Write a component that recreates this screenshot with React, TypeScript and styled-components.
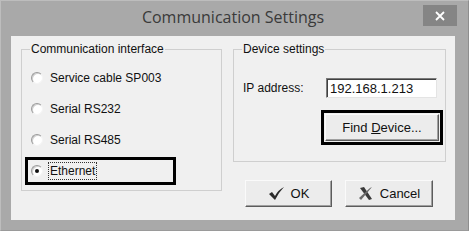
import React from 'react';
import styled, { createGlobalStyle } from 'styled-components';

const GlobalStyle = createGlobalStyle`
  html, body {
    margin: 0;
    padding: 0;
    background: #ffffff;
  }
`;

const Window = styled.div`
  width: 469px;
  height: 231px;
  box-sizing: border-box;
  background: #a9a9a9;
  border: 1px solid #bdbdbd;
  border-right-color: #8e8e8e;
  border-bottom-color: #9a9a9a;
  padding: 0 13px 10px 10px;
  display: flex;
  flex-direction: column;
  font-family: "Liberation Sans", Arial, sans-serif;
  font-size: 12px;
  color: #111;
`;

const TitleBar = styled.div`
  height: 35px;
  display: grid;
  grid-template-columns: 1fr auto 1fr;
  align-items: start;
`;

const Title = styled.div`
  grid-column: 2;
  padding-top: 5px;
  font-family: "Open Sans", "Noto Sans", sans-serif;
  font-size: 16px;
  color: #3a3a3a;
`;

const CloseButton = styled.div`
  grid-column: 3;
  justify-self: end;
  margin-top: 4px;
  margin-right: -2px;
  width: 34px;
  height: 21px;
  background: #858585;
  display: flex;
  align-items: center;
  justify-content: center;
`;

const Client = styled.div`
  flex: 1;
  background: #f0f0f0;
  display: flex;
  gap: 11px;
  padding: 6px 9px 0 10px;
`;

const Group = styled.fieldset<{ $w: number; $h?: number }>`
  width: ${(p) => p.$w}px;
  ${(p) => (p.$h ? `height: ${p.$h}px;` : '')}
  box-sizing: border-box;
  margin: 0;
  border: 1px solid #cfcfcf;
  padding: 3px 3px 0 3px;
  align-self: flex-start;
`;

const Legend = styled.legend`
  padding: 0 1px;
  margin-left: 5px;
  color: #111;
`;

const RadioList = styled.div`
  display: flex;
  flex-direction: column;
  gap: 1px;
  padding: 4px 0 4px 0;
`;

const RadioRow = styled.div<{ $focus?: boolean }>`
  height: ${(p) => (p.$focus ? 28 : 30)}px;
  margin-top: ${(p) => (p.$focus ? 1 : 0)}px;
  width: 151px;
  box-sizing: border-box;
  border: 3px solid ${(p) => (p.$focus ? '#000' : 'transparent')};
  display: flex;
  align-items: center;
  gap: 6px;
  padding-left: 3px;
`;

const RadioDot = styled.span<{ $checked?: boolean }>`
  width: 12px;
  height: 12px;
  box-sizing: border-box;
  border-radius: 50%;
  border: 1px solid;
  border-color: #9a9a9a #f4f4f4 #f4f4f4 #9a9a9a;
  background: #fff;
  box-shadow: inset 1px 1px 0 #d0d0d0;
  display: flex;
  align-items: center;
  justify-content: center;

  &::after {
    content: "";
    width: 4px;
    height: 4px;
    border-radius: 50%;
    background: ${(p) => (p.$checked ? '#111' : 'transparent')};
  }
`;

const RadioLabel = styled.span<{ $focus?: boolean }>`
  padding: 1px 1px;
  outline: ${(p) => (p.$focus ? '1px dotted #333' : 'none')};
`;

const RightColumn = styled.div`
  display: flex;
  flex-direction: column;
`;

const DeviceBody = styled.div`
  display: flex;
  flex-direction: column;
  align-items: flex-end;
  padding: 19px 0 16px 6px;
  gap: 12px;
`;

const IpRow = styled.div`
  align-self: stretch;
  display: flex;
  align-items: center;
  justify-content: space-between;
  padding-right: 5px;
`;

const TextBox = styled.div`
  width: 111px;
  height: 20px;
  box-sizing: border-box;
  background: #fff;
  border: 1px solid;
  border-color: #7a7a7a #e4e4e4 #e4e4e4 #7a7a7a;
  box-shadow: inset 1px 1px 0 #404040;
  display: flex;
  align-items: center;
  padding-left: 3px;
  font-size: 13px;
`;

const FocusFrame = styled.div`
  border: 3px solid #000;
  padding: 1px;
  margin-right: -1px;
`;

const Button = styled.div<{ $w: number }>`
  width: ${(p) => p.$w}px;
  height: 27px;
  box-sizing: border-box;
  background: #ececec;
  border: 1px solid;
  border-color: #fafafa #5c5c5c #5c5c5c #fafafa;
  box-shadow: inset -1px -1px 0 #a0a0a0;
  display: flex;
  align-items: center;
  justify-content: center;
  gap: 6px;
  font-size: 13px;
`;

const ButtonRow = styled.div`
  display: flex;
  gap: 13px;
  padding: 18px 0 0 12px;
`;

const Underlined = styled.span`
  text-decoration: underline;
`;

const Check = () => (
  <svg width="17" height="15" viewBox="0 0 17 15">
    <path d="M1 8 L4 6 L7 10 Q10 4 16 1 Q11 6 7 14 Z" fill="#2b2b2b" />
  </svg>
);

const Cross = () => (
  <svg width="16" height="15" viewBox="0 0 16 15">
    <path d="M2 2 L6 1 L14 13 L11 14 Z" fill="#3a3a3a" />
    <path d="M14 1 L3 14 L1 12 L12 2 Z" fill="#6a6a6a" />
  </svg>
);

const options = ['Service cable SP003', 'Serial RS232', 'Serial RS485', 'Ethernet'];

export default function App() {
  return (
    <>
      <GlobalStyle />
      <Window>
        <TitleBar>
          <Title>Communication Settings</Title>
          <CloseButton>
            <svg width="10" height="10" viewBox="0 0 10 10">
              <path d="M1 1 L9 9 M9 1 L1 9" stroke="#fff" strokeWidth="1.8" />
            </svg>
          </CloseButton>
        </TitleBar>
        <Client>
          <Group $w={202} $h={149}>
            <Legend>Communication interface</Legend>
            <RadioList>
              {options.map((o) => {
                const sel = o === 'Ethernet';
                return (
                  <RadioRow key={o} $focus={sel}>
                    <RadioDot $checked={sel} />
                    <RadioLabel $focus={sel}>{o}</RadioLabel>
                  </RadioRow>
                );
              })}
            </RadioList>
          </Group>
          <RightColumn>
            <Group $w={213}>
              <Legend>Device settings</Legend>
              <DeviceBody>
                <IpRow>
                  <span>IP address:</span>
                  <TextBox>192.168.1.213</TextBox>
                </IpRow>
                <FocusFrame>
                  <Button $w={114}>
                    <span>
                      Find <Underlined>D</Underlined>evice...
                    </span>
                  </Button>
                </FocusFrame>
              </DeviceBody>
            </Group>
            <ButtonRow>
              <Button $w={87}>
                <Check />
                <span>OK</span>
              </Button>
              <Button $w={88}>
                <Cross />
                <span>Cancel</span>
              </Button>
            </ButtonRow>
          </RightColumn>
        </Client>
      </Window>
    </>
  );
}
